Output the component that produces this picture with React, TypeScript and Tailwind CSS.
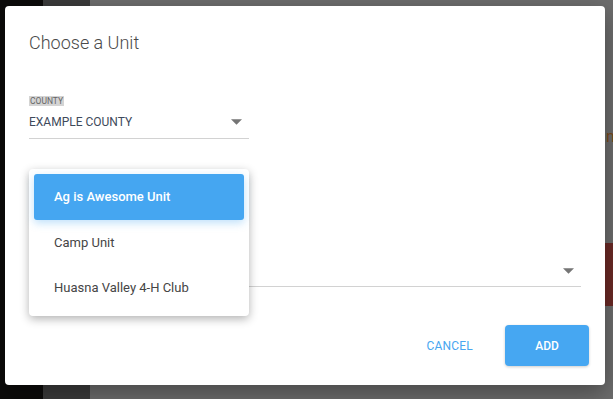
import React from "react";

function Caret({ className = "" }: { className?: string }) {
  return (
    <svg width="11" height="6" viewBox="0 0 10 5" className={className}>
      <path d="M0 0 L10 0 L5 5 Z" fill="#757575" />
    </svg>
  );
}

export default function App() {
  return (
    <div
      className="relative w-[613px] h-[399px] overflow-hidden"
      style={{ fontFamily: "Roboto, 'Liberation Sans', sans-serif" }}
    >
      {/* dimmed page behind */}
      <div className="flex h-full w-full">
        <div className="w-[43px] bg-[#0c0b0a]" />
        <div className="w-[47px] bg-[#3b3b3b]" />
        <div className="flex-1 bg-[#6d6d6d] flex flex-col items-end">
          <div className="h-[127px]" />
          <div className="w-[8px] overflow-hidden pl-[1px] text-[16px] leading-[20px] text-[#7a4a1a]">n</div>
          <div className="h-[96px]" />
          <div className="w-[8px] h-[63px] bg-[#6b2a26]" />
        </div>
      </div>

      {/* dialog */}
      <div className="absolute left-[5px] top-[6px] w-[600px] h-[379px] bg-white rounded-[4px] shadow-[0_8px_24px_rgba(0,0,0,0.35)] flex flex-col px-6 pt-[25px]">
        <div className="text-[18px] leading-[24px] font-light text-[#4a4a4a]">Choose a Unit</div>

        <div className="mt-[41px] w-[220px] flex flex-col">
          <div className="w-fit bg-[#d4d4d4] text-[8.5px] leading-[10px] text-[#666] px-[1px] uppercase">
            County
          </div>
          <div className="flex items-center justify-between h-[24px] mt-[4px] pr-[7px]">
            <span className="text-[12px] text-[#3e4a5b]">EXAMPLE COUNTY</span>
            <Caret />
          </div>
          <div className="h-px bg-[#d2d2d2] mt-[4px]" />
        </div>

        <div className="mt-[129px] w-[552px] flex flex-col">
          <div className="flex justify-end pr-[7px] h-[6px] items-center">
            <Caret />
          </div>
          <div className="h-px bg-[#d2d2d2] mt-[12px]" />
        </div>

        <div className="mt-[38px] -mr-2 flex justify-end items-center gap-[32px]">
          <span className="text-[12px] font-normal text-[#48a6f0] tracking-[0.2px]">CANCEL</span>
          <div className="w-[84px] h-[41px] rounded-[4px] bg-[#46a7f2] shadow-[0_1px_3px_rgba(0,0,0,0.2)] flex items-center justify-center text-[12px] font-medium text-white">
            ADD
          </div>
        </div>
      </div>

      {/* open menu */}
      <div className="absolute left-[29px] top-[169px] w-[220px] h-[147px] bg-white rounded-[4px] shadow-[0_3px_10px_rgba(0,0,0,0.3)] p-[5px] flex flex-col">
        <div className="h-[46px] rounded-[3px] bg-[#45a6f1] shadow-[0_3px_8px_rgba(69,166,241,0.35)] flex items-center pl-[20px] text-[13px] font-medium text-white">
          Ag is Awesome Unit
        </div>
        <div className="h-[46px] flex items-center pl-[20px] text-[13px] text-[#454545]">Camp Unit</div>
        <div className="h-[46px] flex items-center pl-[20px] text-[13px] text-[#454545]">Huasna Valley 4-H Club</div>
      </div>
    </div>
  );
}
